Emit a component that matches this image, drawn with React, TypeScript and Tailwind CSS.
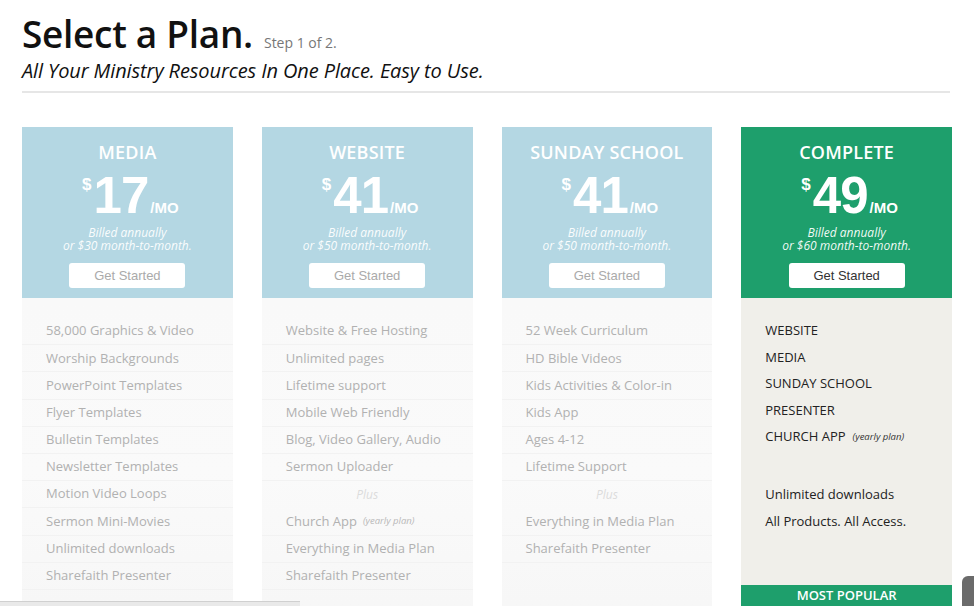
import React from 'react'

type Feature = { text: string; note?: string; plus?: boolean }

type Plan = {
  name: string
  price: string
  monthly: string
  features: Feature[]
}

const plans: Plan[] = [
  {
    name: 'MEDIA',
    price: '17',
    monthly: '$30',
    features: [
      { text: '58,000 Graphics & Video' },
      { text: 'Worship Backgrounds' },
      { text: 'PowerPoint Templates' },
      { text: 'Flyer Templates' },
      { text: 'Bulletin Templates' },
      { text: 'Newsletter Templates' },
      { text: 'Motion Video Loops' },
      { text: 'Sermon Mini-Movies' },
      { text: 'Unlimited downloads' },
      { text: 'Sharefaith Presenter' },
    ],
  },
  {
    name: 'WEBSITE',
    price: '41',
    monthly: '$50',
    features: [
      { text: 'Website & Free Hosting' },
      { text: 'Unlimited pages' },
      { text: 'Lifetime support' },
      { text: 'Mobile Web Friendly' },
      { text: 'Blog, Video Gallery, Audio' },
      { text: 'Sermon Uploader' },
      { text: 'Plus', plus: true },
      { text: 'Church App', note: '(yearly plan)' },
      { text: 'Everything in Media Plan' },
      { text: 'Sharefaith Presenter' },
    ],
  },
  {
    name: 'SUNDAY SCHOOL',
    price: '41',
    monthly: '$50',
    features: [
      { text: '52 Week Curriculum' },
      { text: 'HD Bible Videos' },
      { text: 'Kids Activities & Color-in' },
      { text: 'Kids App' },
      { text: 'Ages 4-12' },
      { text: 'Lifetime Support' },
      { text: 'Plus', plus: true },
      { text: 'Everything in Media Plan' },
      { text: 'Sharefaith Presenter' },
    ],
  },
]

function PriceHeader({ name, price, monthly, green }: { name: string; price: string; monthly: string; green?: boolean }) {
  return (
    <div
      className={`h-[171px] flex flex-col items-center text-white pt-[15px] ${green ? 'bg-[#1e9f6c]' : 'bg-[#b4d7e3]'}`}
    >
      <div className="text-[18px] font-semibold leading-[20px] tracking-[0.2px]">{name}</div>
      <div className="flex items-end mt-[14px] pl-[6px] font-['Liberation_Sans',Arial,sans-serif] font-bold">
        <span className="text-[17px] leading-none self-start mr-[2px]">$</span>
        <span className="text-[51px] leading-[39px] tracking-[-1px]">{price}</span>
        <span className="text-[15px] leading-none ml-[2px]">/MO</span>
      </div>
      <div className="mt-[11px] flex flex-col items-center text-[12px] italic leading-[13px] text-white/95">
        <span className="h-[13px]">Billed annually</span>
        <span className="h-[13px]">or {monthly} month-to-month.</span>
      </div>
      <div
        className={`mt-[11px] w-[116px] h-[25px] bg-white rounded-[3px] flex items-center justify-center font-['Liberation_Sans',Arial,sans-serif] text-[13px] ${green ? 'text-[#333]' : 'text-[#aaa]'}`}
      >
        Get Started
      </div>
    </div>
  )
}

function PlanCard({ plan }: { plan: Plan }) {
  return (
    <div className="w-[211px] flex flex-col">
      <PriceHeader name={plan.name} price={plan.price} monthly={plan.monthly} />
      <div className="flex-1 bg-gradient-to-b from-[#f9f9f9] via-[#fafafa] to-[#f6f6f6] pt-[20px] pb-[30px]">
        {plan.features.map((f, i) =>
          f.plus ? (
            <div key={i} className="h-[27.2px] flex items-center justify-center text-[12px] italic text-[#dcdcdc]">
              {f.text}
            </div>
          ) : (
            <div
              key={i}
              className="h-[27.2px] flex items-center pl-[24px] text-[13px] text-[#b1b1b1] border-b border-[#f2f2f2]"
            >
              {f.text}
              {f.note && <span className="ml-[6px] text-[9.5px] italic text-[#b8b8b8]">{f.note}</span>}
            </div>
          )
        )}
      </div>
    </div>
  )
}

export default function App() {
  const completeTop = ['WEBSITE', 'MEDIA', 'SUNDAY SCHOOL', 'PRESENTER']
  return (
    <div className="relative w-[974px] h-[606px] overflow-hidden bg-white font-['Open_Sans',sans-serif] text-[#111]">
      <div className="px-[22px] pt-[10px]">
        <div className="flex items-baseline">
          <h1 className="text-[37px] font-semibold leading-[48px] tracking-[-0.3px]">Select a Plan.</h1>
          <span className="ml-[11px] text-[14px] text-[#777]">Step 1 of 2.</span>
        </div>
        <p className="text-[20px] italic leading-[26px] text-[#111] tracking-[-0.1px]">
          All Your Ministry Resources In One Place. Easy to Use.
        </p>
        <div className="mt-[7px] mr-[2px] h-[2px] bg-[#e6e6e6]" />

        {/* Plans */}
        <div className="mt-[34px] flex gap-[29px] h-[520px]">
          {plans.map((p) => (
            <PlanCard key={p.name} plan={p} />
          ))}

          {/* Complete */}
          <div className="w-[211px] flex flex-col">
            <PriceHeader name="COMPLETE" price="49" monthly="$60" green />
            <div className="h-[309px] bg-[#f0efea] flex flex-col pt-[20px]">
              {completeTop.map((t) => (
                <div key={t} className="h-[26.4px] flex items-center pl-[24px] text-[13px] text-[#222]">
                  {t}
                </div>
              ))}
              <div className="h-[26.4px] flex items-center pl-[24px] text-[13px] text-[#222]">
                CHURCH APP
                <span className="ml-[7px] text-[9.5px] italic text-[#333]">(yearly plan)</span>
              </div>
              <div className="h-[31px]" />
              <div className="h-[27px] flex items-center pl-[24px] text-[13px] text-[#222]">Unlimited downloads</div>
              <div className="h-[27px] flex items-center pl-[24px] text-[13px] text-[#222]">All Products. All Access.</div>
              <div className="flex-1" />
              <div className="h-[22px] bg-[#1e9f6c] text-white text-[13px] font-semibold flex items-center justify-center">
                MOST POPULAR
              </div>
            </div>
          </div>
        </div>
      </div>

      {/* screenshot chrome remnants */}
      <div className="absolute left-0 bottom-0 w-[300px] h-[5px] bg-[#e9e9e9] border-t border-[#d0d0d0]" />
      <div className="absolute right-0 bottom-0 w-[12px] h-[30px] rounded-tl-[6px] bg-[#6b6b6b]" />
    </div>
  )
}
